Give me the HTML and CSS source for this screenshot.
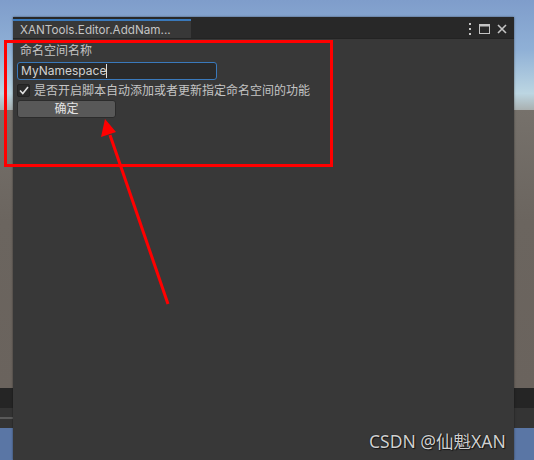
FILE: index.html
```html
<!DOCTYPE html>
<html>
<head>
<meta charset="utf-8">
<link rel="stylesheet" href="styles.css">
</head>
<body>
<div class="desk">
  <div class="scene">
    <div class="sky"></div>
    <div class="ground"></div>
    <div class="bar-dark"></div>
    <div class="bar-mid"><span class="mid-line"></span></div>
    <div class="bar-blue"></div>
  </div>

  <div class="window">
    <div class="tabbar">
      <div class="tab">XANTools.Editor.AddNam...</div>
      <div class="win-icons">
        <svg width="4" height="12" viewBox="0 0 4 12"><rect x="1" y="0" width="2" height="2" fill="#c4c4c4"/><rect x="1" y="5" width="2" height="2" fill="#c4c4c4"/><rect x="1" y="10" width="2" height="2" fill="#c4c4c4"/></svg>
        <svg width="11" height="10" viewBox="0 0 11 10"><rect x="0.5" y="0.5" width="10" height="9" fill="none" stroke="#c4c4c4"/><rect x="0.5" y="0.5" width="10" height="2" fill="#c4c4c4"/></svg>
        <svg width="10" height="10" viewBox="0 0 10 10"><path d="M1 1 L9 9 M9 1 L1 9" stroke="#c4c4c4" stroke-width="1.6"/></svg>
      </div>
    </div>
    <div class="content">
      <div class="label">命名空间名称</div>
      <div class="input">MyNamespace<span class="caret"></span></div>
      <div class="toggle">
        <span class="checkbox"><svg width="10" height="9" viewBox="0 0 10 9"><path d="M1 4.5 L3.8 7.5 L9 1" fill="none" stroke="#e0e0e0" stroke-width="1.6"/></svg></span>
        <span class="toggle-text">是否开启脚本自动添加或者更新指定命名空间的功能</span>
      </div>
      <div class="button">确定</div>
    </div>
  </div>

  <div class="highlight"></div>
  <svg class="arrow" width="534" height="460" viewBox="0 0 534 460">
    <line x1="168" y1="304" x2="110" y2="135" stroke="#ff0000" stroke-width="3"/>
    <polygon points="105,119 101,137 116,132" fill="#ff0000"/>
  </svg>

  <div class="watermark">CSDN @仙魁XAN</div>
</div>
</body>
</html>
```

FILE: styles.css
```css
html, body {
  margin: 0;
  padding: 0;
  width: 534px;
  height: 460px;
  overflow: hidden;
  background: #6b655f;
}
.desk {
  position: relative;
  width: 534px;
  height: 460px;
  font-family: Inter, "Noto Sans CJK SC", sans-serif;
}
.scene {
  display: flex;
  flex-direction: column;
  width: 534px;
  height: 460px;
}
.sky {
  height: 110px;
  background: linear-gradient(#7f9dcb 0%, #8fb0d6 45%, #bcd6e2 85%, #a9b0b0 100%);
}
.ground {
  height: 278px;
  background: linear-gradient(#76716b 0%, #6b655f 40%, #6a635d 100%);
}
.bar-dark {
  height: 20px;
  background: #252525;
}
.bar-mid {
  height: 20px;
  background: #343434;
  display: flex;
  align-items: center;
}
.mid-line {
  display: block;
  width: 13px;
  height: 2px;
  background: #5a5a5a;
}
.bar-blue {
  flex: 1;
  background: #5a76a5;
}
.window {
  position: absolute;
  left: 13px;
  top: 17px;
  width: 501px;
  height: 443px;
  background: #383838;
  box-shadow: 0 0 2px rgba(0,0,0,0.5);
  display: flex;
  flex-direction: column;
}
.tabbar {
  height: 21px;
  background: #282828;
  display: flex;
  align-items: stretch;
  border-bottom: 1px solid #232323;
}
.tab {
  width: 178px;
  box-sizing: border-box;
  border-top: 2px solid #3a79bb;
  margin-top: 2px;
  background: #383838;
  color: #c4c4c4;
  font-size: 11.7px;
  padding-left: 7px;
  line-height: 18px;
  white-space: nowrap;
}
.win-icons {
  margin-left: auto;
  display: flex;
  align-items: center;
  gap: 7px;
  padding-right: 7px;
  padding-top: 2px;
}
.content {
  padding: 4px 0 0 4px;
  display: flex;
  flex-direction: column;
  align-items: flex-start;
  color: #c4c4c4;
  font-size: 12px;
}
.label {
  padding-left: 3px;
  line-height: 16px;
}
.input {
  margin-top: 3px;
  width: 200px;
  height: 18px;
  box-sizing: border-box;
  border: 1px solid #3a79bb;
  border-radius: 3px;
  background: #2a2a2a;
  color: #d2d2d2;
  font-size: 12px;
  line-height: 16px;
  padding-left: 3px;
  display: flex;
  align-items: center;
}
.caret {
  display: inline-block;
  width: 1px;
  height: 14px;
  background: #e0e0e0;
}
.toggle {
  margin-top: 3px;
  display: flex;
  align-items: center;
  gap: 4px;
  height: 15px;
}
.checkbox {
  width: 13px;
  height: 13px;
  border-radius: 2px;
  background: #2a2a2a;
  border: 1px solid #222;
  box-sizing: border-box;
  display: flex;
  align-items: center;
  justify-content: center;
}
.toggle-text {
  line-height: 15px;
}
.button {
  margin-top: 2px;
  width: 99px;
  height: 18px;
  box-sizing: border-box;
  background: #585858;
  border: 1px solid #2b2b2b;
  border-radius: 3px;
  color: #e4e4e4;
  text-align: center;
  line-height: 16px;
}
.highlight {
  position: absolute;
  left: 4px;
  top: 40px;
  width: 323px;
  height: 121px;
  border: 3px solid #ff0000;
}
.arrow {
  position: absolute;
  left: 0;
  top: 0;
}
.watermark {
  position: absolute;
  left: 369px;
  top: 428px;
  color: #d0d0d0;
  font-size: 17.5px;
  font-family: "Noto Sans", "Noto Sans CJK SC", sans-serif;
  text-shadow: 0 0 1px #000, 1px 1px 1px rgba(0,0,0,0.6);
  white-space: nowrap;
}
```
